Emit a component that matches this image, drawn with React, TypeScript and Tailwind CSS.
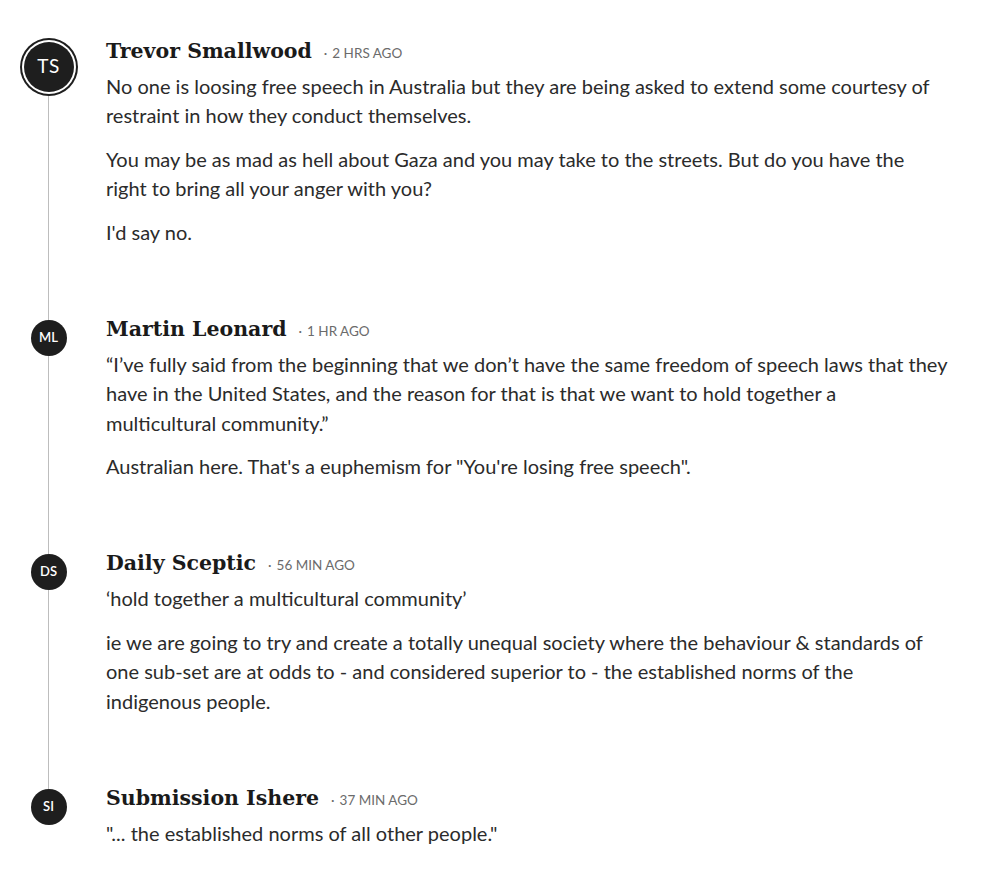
import React from "react";

type C = {
  initials: string;
  name: string;
  time: string;
  paras: string[];
  big?: boolean;
};

const comments: C[] = [
  {
    initials: "TS",
    name: "Trevor Smallwood",
    time: "2 HRS AGO",
    big: true,
    paras: [
      "No one is loosing free speech in Australia but they are being asked to extend some courtesy of restraint in how they conduct themselves.",
      "You may be as mad as hell about Gaza and you may take to the streets. But do you have the right to bring all your anger with you?",
      "I'd say no.",
    ],
  },
  {
    initials: "ML",
    name: "Martin Leonard",
    time: "1 HR AGO",
    paras: [
      "\u201CI\u2019ve fully said from the beginning that we don\u2019t have the same freedom of speech laws that they have in the United States, and the reason for that is that we want to hold together a multicultural community.\u201D",
      "Australian here. That's a euphemism for \"You're losing free speech\".",
    ],
  },
  {
    initials: "DS",
    name: "Daily Sceptic",
    time: "56 MIN AGO",
    paras: [
      "\u2018hold together a multicultural community\u2019",
      "ie we are going to try and create a totally unequal society where the behaviour & standards of one sub-set are at odds to - and considered superior to - the established norms of the indigenous people.",
    ],
  },
  {
    initials: "SI",
    name: "Submission Ishere",
    time: "37 MIN AGO",
    paras: ["\"... the established norms of all other people.\""],
  },
];

export default function App() {
  return (
    <div className="w-[997px] h-[885px] bg-white pt-[35.5px] overflow-hidden" style={{ fontFamily: "Lato, 'Open Sans', sans-serif" }}>
      {comments.map((c, i) => {
        const first = i === 0;
        const last = i === comments.length - 1;
        return (
          <div key={i} className="flex">
            <div className="w-[97px] shrink-0 flex flex-col items-center">
              <div className={`w-px ${first ? "h-[2px]" : "h-[6px] bg-[#bdbdbd]"}`} />
              {c.big ? (
                <div className="w-[58px] h-[58px] rounded-full bg-[#1e1e1e] flex items-center justify-center">
                  <div className="w-[54px] h-[54px] rounded-full bg-white flex items-center justify-center">
                    <div className="w-[50px] h-[50px] rounded-full bg-[#1e1e1e] flex items-center justify-center text-white text-[19px] tracking-[0.5px]">
                      {c.initials}
                    </div>
                  </div>
                </div>
              ) : (
                <div className="w-[36px] h-[36px] rounded-full bg-[#1e1e1e] flex items-center justify-center text-white text-[13px] font-semibold">
                  {c.initials}
                </div>
              )}
              {!last && <div className="w-px flex-1 bg-[#bdbdbd]" />}
            </div>
            <div className={`ml-[9px] w-[843px] ${last ? "" : "pb-[66.5px]"}`}>
              <div className="flex items-baseline h-[30px]">
                <span
                  className="text-[20.5px] font-bold text-[#1a1a1a] leading-[30px]"
                  style={{ fontFamily: "'DejaVu Serif', serif" }}
                >
                  {c.name}
                </span>
                <span className="ml-[12px] text-[13.5px] text-[#6b6b6b]">
                  <span className="mr-[5px]">·</span>
                  {c.time}
                </span>
              </div>
              <div className="mt-[6px] flex flex-col gap-[14px] text-[20px] leading-[29.5px] text-[#2b2b2b]">
                {c.paras.map((p, j) => (
                  <p key={j}>{p}</p>
                ))}
              </div>
            </div>
          </div>
        );
      })}
    </div>
  );
}
